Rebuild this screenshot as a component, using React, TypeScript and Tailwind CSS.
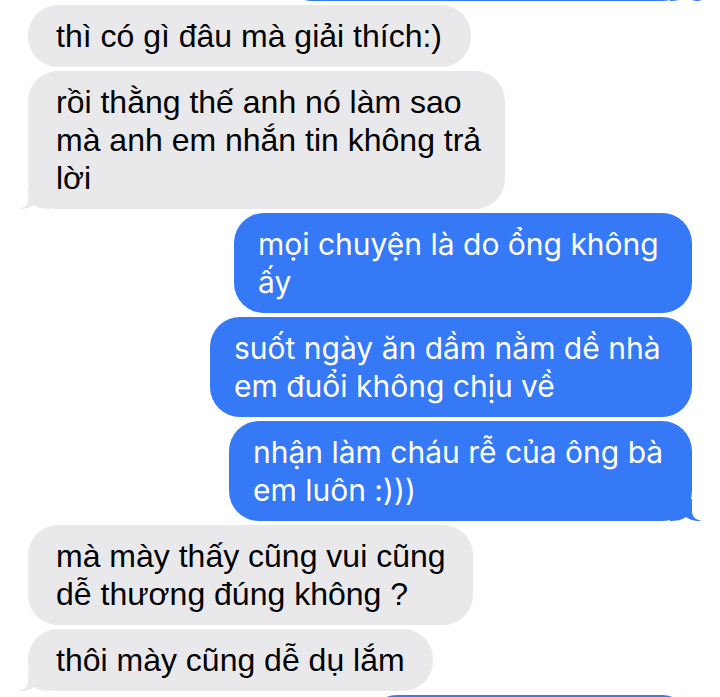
import type { ReactNode } from "react";

const GRAY = "#e9e9eb";
const BLUE = "#3579f6";

function Tail({ color, side }: { color: string; side: "left" | "right" }) {
  return (
    <svg
      width="32"
      height="22"
      viewBox="0 0 32 22"
      className={
        side === "left"
          ? "absolute -left-[10px] bottom-0"
          : "absolute -right-[10px] bottom-0 -scale-x-100"
      }
    >
      <path
        d="M10 0 L10 12 C10 18 6 21 0 22 C6 22.5 12 21 16 18 C20 21 26 22 32 22 L32 0 Z"
        fill={color}
      />
    </svg>
  );
}

function Bubble({
  me,
  tail,
  width,
  children,
}: {
  me?: boolean;
  tail?: boolean;
  width: string;
  children?: ReactNode;
}) {
  return (
    <div
      className={`relative rounded-[30px] py-[12px] leading-[38px] whitespace-nowrap ${width} ${
        me
          ? "self-end bg-[#3579f6] pl-[24px] text-white text-[30px] font-['Inter',sans-serif]"
          : "self-start bg-[#e9e9eb] pl-[28px] text-black text-[32px] font-['Liberation_Sans',sans-serif]"
      }`}
    >
      {tail && <Tail color={me ? BLUE : GRAY} side={me ? "right" : "left"} />}
      <div className="relative">{children}</div>
    </div>
  );
}

export default function App() {
  return (
    <div className="h-[697px] w-[720px] overflow-hidden bg-white">
      <div className="flex flex-col gap-[4px] pl-[28px] pr-[28px] -mt-[61px]">
        <Bubble me tail width="w-[410px]">
          &nbsp;
        </Bubble>
        <Bubble width="w-[443px]">thì có gì đâu mà giải thích:)</Bubble>
        <Bubble tail width="w-[477px]">
          rồi thằng thế anh nó làm sao
          <br />
          mà anh em nhắn tin không trả
          <br />
          lời
        </Bubble>
        <Bubble me width="w-[458px]">
          mọi chuyện là do ổng không
          <br />
          ấy
        </Bubble>
        <Bubble me width="w-[482px]">
          suốt ngày ăn dầm nằm dề nhà
          <br />
          em đuổi không chịu về
        </Bubble>
        <Bubble me tail width="w-[463px]">
          nhận làm cháu rễ của ông bà
          <br />
          em luôn :)))
        </Bubble>
        <Bubble width="w-[445px]">
          mà mày thấy cũng vui cũng
          <br />
          dễ thương đúng không ?
        </Bubble>
        <Bubble tail width="w-[405px]">
          thôi mày cũng dễ dụ lắm
        </Bubble>
        <Bubble me width="w-[325px]">
          &nbsp;
        </Bubble>
      </div>
    </div>
  );
}
